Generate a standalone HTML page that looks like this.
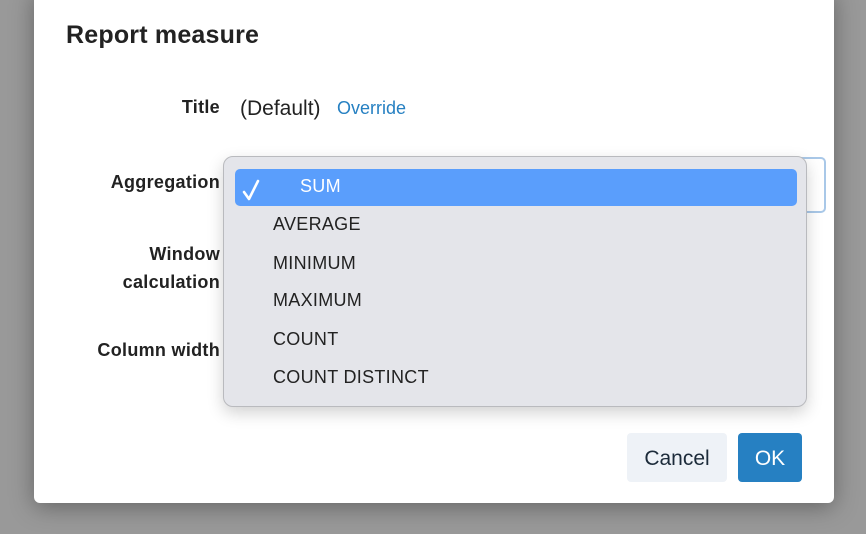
<!DOCTYPE html>
<html><head><style>
body{margin:0;width:866px;height:534px;background:#999;font-family:"Liberation Sans",sans-serif;position:relative;overflow:hidden}
.dlg{position:absolute;left:34px;top:-10px;width:800px;height:513px;background:#fff;border-radius:6px;box-shadow:0 4px 24px rgba(0,0,0,.35)}
.a{position:absolute;white-space:nowrap}
.lbl{font-weight:bold;font-size:18px;letter-spacing:.3px;color:#222;text-align:right;right:646px}
.sel{position:absolute;left:238px;top:157px;width:584px;height:52px;border:2px solid #a9c8e8;border-radius:5px;background:#fff}
.dd{position:absolute;left:223px;top:156px;width:582px;height:249px;background:#e4e5ea;border:1px solid #b9babe;border-radius:10px;box-shadow:0 6px 16px rgba(0,0,0,.18)}
.hl{position:absolute;left:11px;top:12px;width:562px;height:37px;background:#5a9efc;border-radius:5px}
.it{position:absolute;left:49px;font-size:18px;color:#222;letter-spacing:.3px}
.btn{position:absolute;top:433px;height:49px;border-radius:4px;font-size:21px;line-height:51px;text-align:center}
</style></head><body>
<div class="dlg"></div>
<div class="a" style="left:66px;top:21px;font-size:25px;color:#222;font-weight:bold;letter-spacing:.2px">Report measure</div>
<div class="a lbl" style="top:97px">Title</div>
<div class="a" style="left:240px;top:97px;font-size:21px;color:#222">(Default)</div>
<div class="a" style="left:337px;top:98px;font-size:18px;color:#2680c2">Override</div>
<div class="a lbl" style="top:172px">Aggregation</div>
<div class="a lbl" style="top:244px">Window</div>
<div class="a lbl" style="top:272px">calculation</div>
<div class="a lbl" style="top:340px">Column width</div>
<div class="sel"></div>
<div class="dd">
<div class="hl"></div>
<svg style="position:absolute;left:17px;top:21px" width="22" height="24" viewBox="0 0 22 24"><path d="M3 14 L8 21 L17 3" stroke="#fff" stroke-width="2.6" fill="none" stroke-linecap="round" stroke-linejoin="round"/></svg>
<div class="it" style="top:19px;left:76px;color:#fff">SUM</div>
<div class="it" style="top:57px">AVERAGE</div>
<div class="it" style="top:96px">MINIMUM</div>
<div class="it" style="top:133px">MAXIMUM</div>
<div class="it" style="top:172px">COUNT</div>
<div class="it" style="top:210px">COUNT DISTINCT</div>
</div>
<div class="btn" style="left:627px;width:100px;background:#eef2f7;color:#1c2b3a">Cancel</div>
<div class="btn" style="left:738px;width:64px;background:#2680c2;color:#fff">OK</div>
</body></html>
